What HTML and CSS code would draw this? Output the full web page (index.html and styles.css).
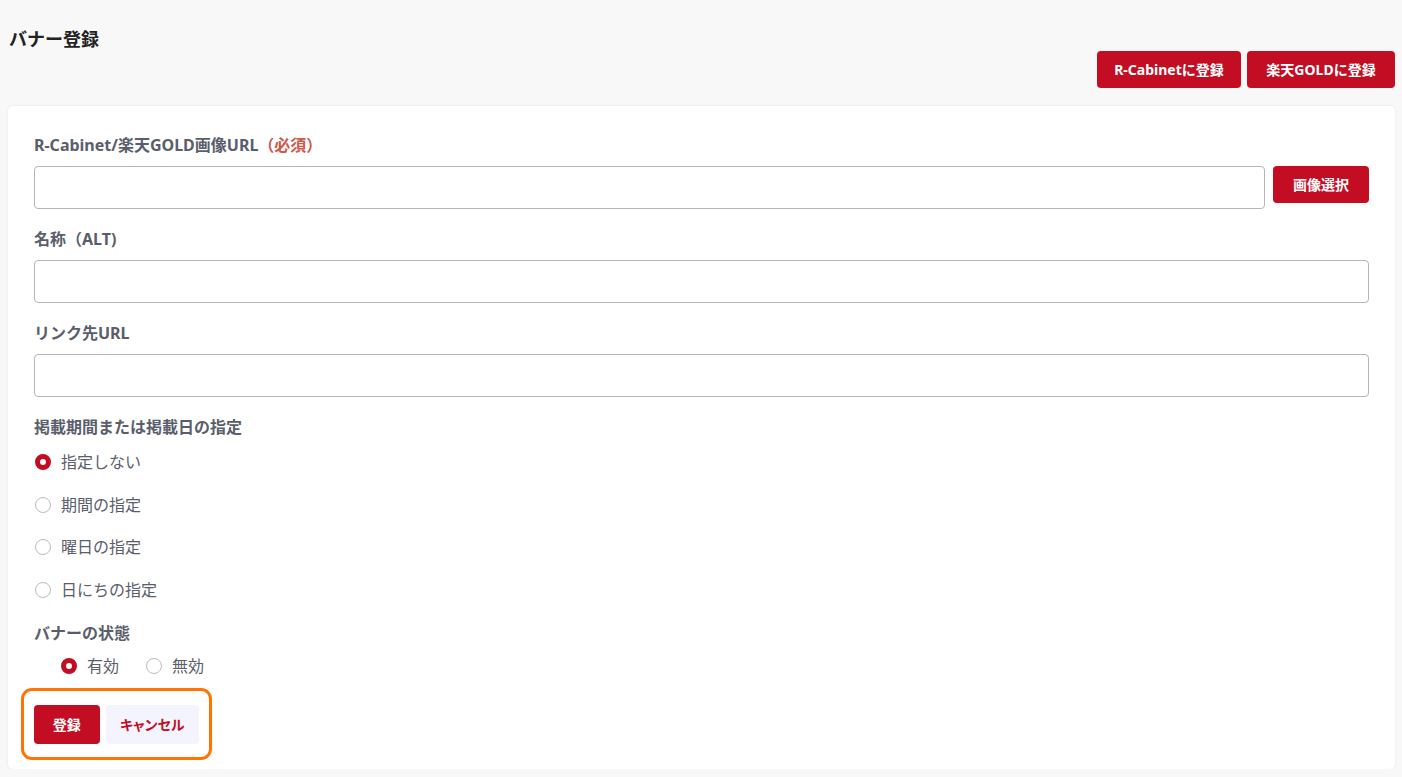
FILE: index.html
```html
<!DOCTYPE html>
<html lang="ja">
<head>
<meta charset="utf-8">
<title>バナー登録</title>
<link rel="stylesheet" href="styles.css">
</head>
<body>
<div class="page">
  <h1 class="title">バナー登録</h1>
  <div class="top-actions">
    <button class="btn btn-red btn-cabinet">R-Cabinetに登録</button>
    <button class="btn btn-red btn-gold">楽天GOLDに登録</button>
  </div>
  <div class="card">
    <div class="field">
      <div class="label">R-Cabinet/楽天GOLD画像URL<span class="req">（必須）</span></div>
      <div class="row">
        <input class="input" type="text">
        <button class="btn btn-red btn-select">画像選択</button>
      </div>
    </div>
    <div class="field">
      <div class="label">名称（ALT)</div>
      <input class="input" type="text">
    </div>
    <div class="field">
      <div class="label">リンク先URL</div>
      <input class="input" type="text">
    </div>
    <div class="field">
      <div class="label">掲載期間または掲載日の指定</div>
      <div class="radio-list">
        <label class="radio"><span class="dot checked"></span>指定しない</label>
        <label class="radio"><span class="dot"></span>期間の指定</label>
        <label class="radio"><span class="dot"></span>曜日の指定</label>
        <label class="radio"><span class="dot"></span>日にちの指定</label>
      </div>
    </div>
    <div class="field field-state">
      <div class="label">バナーの状態</div>
      <div class="radio-inline">
        <label class="radio"><span class="dot checked"></span>有効</label>
        <label class="radio"><span class="dot"></span>無効</label>
      </div>
    </div>
    <div class="actions">
      <button class="btn btn-red btn-submit">登録</button>
      <button class="btn btn-light">キャンセル</button>
    </div>
  </div>
</div>
</body>
</html>
```
FILE: styles.css
```css
* { box-sizing: border-box; }
html, body { margin: 0; padding: 0; }
body {
  background: #f8f8f8;
  font-family: "Noto Sans", "Noto Sans CJK JP", sans-serif;
  color: #212529;
}
.page {
  padding: 25px 7px 0 8px;
}
.title {
  margin: 0 0 0 1px;
  font-size: 18px;
  font-weight: 700;
  line-height: 28px;
  color: #222;
}
.top-actions {
  display: flex;
  justify-content: flex-end;
  gap: 6px;
  margin-top: -2px;
}
.btn {
  font-family: inherit;
  font-size: 14px;
  font-weight: 700;
  border: none;
  border-radius: 4px;
  height: 37px;
  padding: 0;
  cursor: pointer;
  line-height: 1;
}
.btn-red {
  background: #c30d23;
  color: #fff;
}
.btn-cabinet { width: 144px; }
.btn-gold { width: 148px; }
.card {
  margin-top: 18px;
  background: #fff;
  border-radius: 5px;
  box-shadow: 0 0 3px rgba(0,0,0,0.08);
  padding: 28px 26px 0 26px;
  height: 663px;
}
.field { margin-bottom: 19px; }
.label {
  font-size: 16px;
  font-weight: 700;
  color: #5a5e6b;
  line-height: 22px;
  margin-bottom: 10px;
}
.req { color: #d0574a; }
.row { display: flex; gap: 8px; align-items: flex-start; }
.input {
  display: block;
  width: 100%;
  height: 43px;
  border: 1px solid #b5b5b5;
  border-radius: 4px;
  background: #fff;
  font-family: inherit;
  font-size: 14px;
}
.row .input { flex: 1; width: auto; }
.btn-select { flex: none; width: 96px; }
.radio-list {
  display: flex;
  flex-direction: column;
  gap: 20.7px;
  margin-top: 13px;
}
.radio {
  display: flex;
  align-items: center;
  font-size: 16px;
  color: #5a5e6b;
  line-height: 22px;
  gap: 10px;
}
.radio-list .radio { margin-left: 1px; }
.dot {
  width: 16px;
  height: 16px;
  border-radius: 50%;
  border: 1px solid #bcbcbc;
  background: #fff;
  flex: none;
}
.dot.checked {
  border: 5px solid #c30d23;
}
.field-state { margin-top: 21px; margin-bottom: 11px; }
.field-state .label { margin-bottom: 11px; }
.radio-inline {
  display: flex;
  gap: 27px;
  padding-left: 27px;
}
.actions {
  display: flex;
  gap: 6px;
  margin: 0 0 0 -13px;
  width: 191px;
  height: 72px;
  border: 3px solid #ff7300;
  border-radius: 11px;
  padding: 14px 10px 0 10px;
}
.btn-submit { width: 66px; height: 39px; }
.btn-light {
  background: #f3f4fd;
  color: #c30d23;
  width: 94px;
  height: 39px;
  font-feature-settings: "palt";
}
```
